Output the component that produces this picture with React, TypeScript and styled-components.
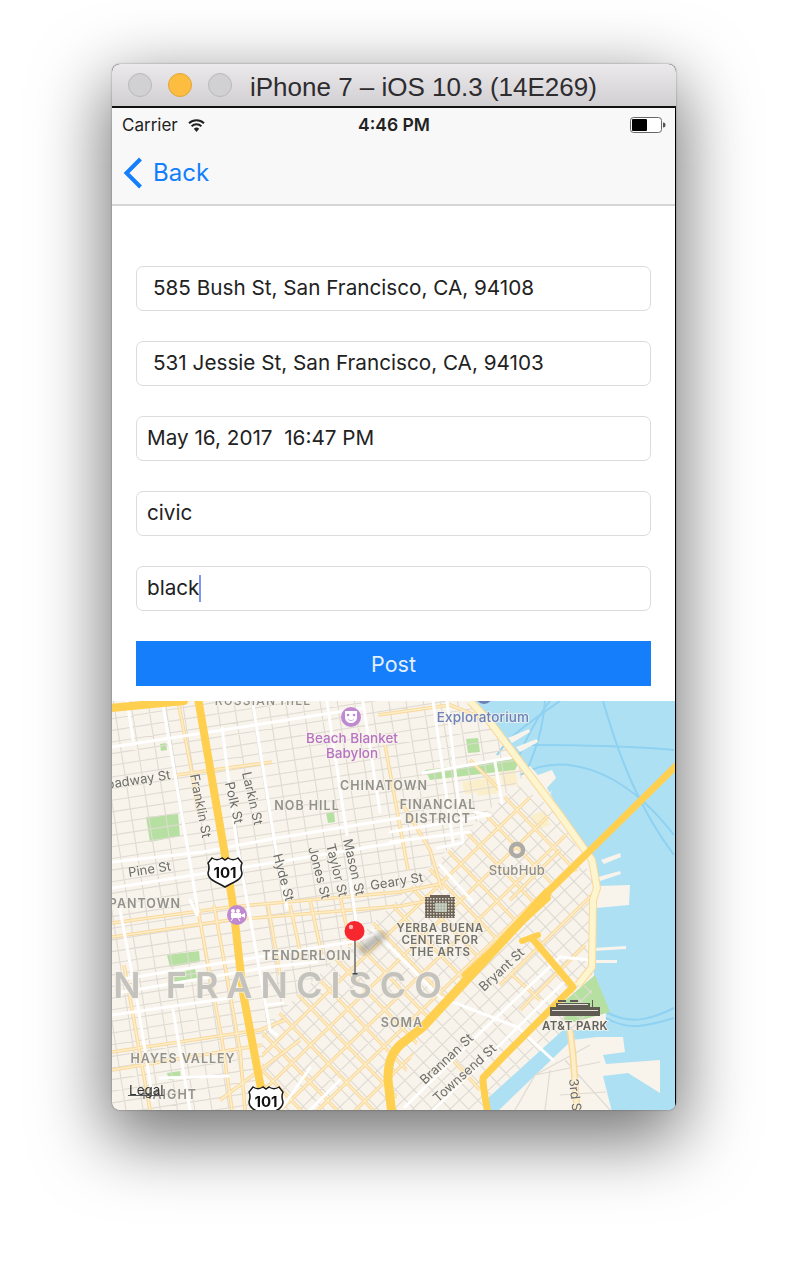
import React from 'react';
import styled, { createGlobalStyle } from 'styled-components';

const Global = createGlobalStyle`
  html, body { margin: 0; padding: 0; background: #fff; }
  body { width: 788px; height: 1270px; overflow: hidden; font-family: Inter, "Liberation Sans", sans-serif; }
`;
const Stage = styled.div`padding: 64px 0 0 112px;`;
const Window = styled.div`
  width: 564px; height: 1046px; border-radius: 8px; overflow: hidden;
  box-shadow: 0 24px 70px 6px rgba(0,0,0,0.55), 0 0 2px rgba(0,0,0,0.4);
  display: flex; flex-direction: column; background: #000;
`;
const TitleBar = styled.div`
  height: 42px; flex: none; display: flex; align-items: center; padding-left: 16px;
  background: linear-gradient(#ebe9eb, #d1cfd2);
  border-bottom: 2px solid #111;
`;
const Light = styled.span<{ $on?: boolean }>`
  width: 24px; height: 24px; border-radius: 50%; box-sizing: border-box; margin-right: 16px;
  background: ${p => (p.$on ? '#fdbd41' : '#d1d0d2')};
  border: 1px solid ${p => (p.$on ? '#e2a634' : '#b9b8ba')};
`;
const Title = styled.div`
  margin-left: 2px; padding-top: 5px; font: 26px "Liberation Sans", sans-serif; color: #2e2c2f; white-space: nowrap;
`;
const Screen = styled.div`
  flex: 1; min-height: 0; display: flex; flex-direction: column; background: #fff;
  margin: 0 1px 0 0;
`;
const Header = styled.div`
  height: 96px; flex: none; background: #f8f8f8; border-bottom: 2px solid #d6d6d6;
  display: flex; flex-direction: column;
`;
const StatusBar = styled.div`
  height: 29px; padding: 2px 9px 0 10px; display: grid; grid-template-columns: 1fr auto 1fr; align-items: center;
  font: 17px Inter, sans-serif; color: #222;
`;
const Carrier = styled.div`display: flex; align-items: center; gap: 9px;`;
const Clock = styled.div`font-weight: 600; font-size: 17.500px; padding-left: 0;`;
const Battery = styled.div`justify-self: end; display: flex;`;
const NavBar = styled.div`
  flex: 1; display: flex; align-items: center; gap: 10px; padding: 2px 0 0 11px;
  font: 24px Inter, sans-serif; color: #147efb;
`;
const Form = styled.div`
  padding: 60px 24px 15px 24px; display: flex; flex-direction: column; gap: 30px; flex: none;
`;
const Field = styled.div<{ $indent?: boolean }>`
  height: 45px; box-sizing: border-box; border: 1px solid #dcdcdc; border-radius: 7px;
  display: flex; align-items: center; padding: 0 0 3px ${p => (p.$indent ? 16 : 10)}px;
  font: 20.700px Inter, sans-serif; color: #222; white-space: pre;
`;
const Caret = styled.span`
  display: inline-block; width: 2px; height: 27px; margin-top: 2px; background: #7f95ee;
`;
const PostButton = styled.div`
  height: 45px; background: #147efb; color: #e3effd; display: flex; align-items: center; justify-content: center;
  font: 21.500px Inter, sans-serif;
`;
const MapView = styled.div`
  flex: 1; min-height: 0; overflow: hidden;
  svg { display: block; filter: blur(0.45px); }
`;
const MapText = styled.text<{ $s: number; $c: string; $w?: number; $ls?: number }>`
  font-family: Inter, "Liberation Sans", sans-serif;
  font-size: ${p => p.$s}px;
  fill: ${p => p.$c};
  font-weight: ${p => p.$w ?? 400};
  letter-spacing: ${p => p.$ls ?? 0}px;
  paint-order: stroke;
  stroke: rgba(247,243,235,0.7);
  stroke-width: 2px;
`;

type P = [number, number];
const poly = (pts: P[]) => 'M' + pts.map(p => p.join(' ')).join('L');

const NW_E: P = [0.988, -0.155];
const NW_N: P = [0.155, 0.988];
const SE_E: P = [0.72, -0.694];
const SE_N: P = [0.694, 0.72];

function family(o: P, dir: P, step: P, from: number, to: number): string {
  let d = '';
  for (let i = from; i <= to; i++) {
    const c: P = [o[0] + step[0] * i, o[1] + step[1] * i];
    d += `M${c[0] - dir[0] * 800} ${c[1] - dir[1] * 800}L${c[0] + dir[0] * 800} ${c[1] + dir[1] * 800}`;
  }
  return d;
}

const nwMinor =
  family([240, 850], NW_E, [NW_N[0] * 11.5, NW_N[1] * 11.5], -14, 22) +
  family([240, 850], NW_N, [NW_E[0] * 17, NW_E[1] * 17], -9, 26);
const seMinor =
  family([480, 990], SE_E, [SE_N[0] * 13, SE_N[1] * 13], -16, 16) +
  family([480, 990], SE_N, [SE_E[0] * 13, SE_E[1] * 13], -18, 18);
const seArterial =
  family([480, 990], SE_E, [SE_N[0] * 26, SE_N[1] * 26], -8, 8) +
  family([474, 990], SE_N, [SE_E[0] * 26, SE_E[1] * 26], -9, 9);

const ArterialsNW: P[][] = [
  [[178, 701], [192, 773], [198, 812]],
  [[177, 775], [272, 762]],
  [[112, 923], [230, 907], [400, 892], [440, 884]],
  [[112, 937], [230, 920], [400, 906], [432, 900]],
  [[197, 905], [222, 1040], [232, 1110]],
  [[214, 905], [240, 1050], [245, 1110]],
  [[268, 905], [280, 975]],
  [[290, 905], [302, 960]],
  [[310, 900], [322, 955]],
  [[340, 895], [350, 945]],
  [[112, 1052], [260, 1030], [285, 1020]],
  [[112, 1070], [262, 1045]],
  [[220, 1100], [300, 1040]],
  [[378, 715], [450, 705], [500, 725]],
  [[400, 800], [430, 850], [442, 890]],
  [[124, 965], [150, 1110]],
  [[385, 745], [408, 870]],
  [[470, 760], [480, 770], [500, 790]],
];
const ArterialsSE: P[][] = [
  [[510, 973], [540, 1000]],
  [[453, 1060], [480, 1090]],
  [[500, 985], [592, 895]],
  [[520, 1010], [585, 945]],
  [[560, 850], [510, 900]],
];
const WhiteRoads: P[][] = [
  [[163, 705], [190, 862], [198, 912]],
  [[127, 701], [133, 740]],
  [[222, 728], [237, 845], [247, 900], [270, 1030], [277, 1035]],
  [[253, 705], [275, 845], [287, 908]],
  [[327, 702], [347, 835]],
  [[363, 702], [380, 812]],
  [[112, 747], [255, 725], [363, 708]],
  [[112, 862], [203, 852], [277, 838], [400, 818]],
  [[112, 888], [207, 873], [277, 862], [400, 842]],
  [[423, 773], [515, 757]],
  [[390, 832], [450, 822], [490, 815]],
  [[390, 842], [470, 832]],
  [[437, 848], [462, 843]],
  [[433, 701], [453, 842]],
  [[447, 701], [463, 842]],
  [[495, 762], [502, 803]],
  [[475, 812], [490, 815]],
  [[440, 865], [473, 902]],
  [[117, 980], [240, 960], [350, 942], [373, 935]],
  [[117, 993], [270, 967], [317, 962]],
  [[112, 1015], [230, 998]],
  [[267, 1005], [283, 1003]],
  [[120, 910], [137, 1000], [153, 1100]],
  [[173, 1010], [190, 1110]],
  [[190, 900], [197, 915]],
  [[350, 880], [358, 935]],
  [[373, 930], [440, 997], [517, 1027], [553, 1060]],
  [[405, 1107], [480, 1033], [560, 957], [590, 960]],
  [[433, 1110], [563, 983]],
  [[160, 1078], [228, 1076]],
  [[282, 1108], [310, 1068]],
  [[310, 1110], [340, 1080]],
];

const Shield = ({ x, y }: { x: number; y: number }) => (
  <g transform={`translate(${x} ${y})`}>
    <path d="M-13 -14C-10 -12 -6 -12 -3 -14L0 -12L3 -14C6 -12 10 -12 13 -14L17 -9C15 -5 16 -2 17 1C17 8 8 10 0 15C-8 10 -17 8 -17 1C-16 -2 -15 -5 -17 -9Z"
      fill="#fff" stroke="#1a1a1a" strokeWidth="1.500" />
    <MapText x="0" y="6" textAnchor="middle" $s={15} $c="#111" $w={700} style={{ stroke: 'none' }}>101</MapText>
  </g>
);

const labels: { t: string; x: number; y: number; s: number; c: string; w?: number; ls?: number; r?: number; a?: 'start' | 'middle' | 'end' }[] = [
  { t: 'RUSSIAN HILL', x: 263, y: 705, s: 12, c: '#908f8a', w: 500, ls: 1.2, a: 'middle' },
  { t: 'Beach Blanket', x: 352, y: 743, s: 13.500, c: '#b772c2', w: 500, a: 'middle' },
  { t: 'Babylon', x: 352, y: 758, s: 13.500, c: '#b772c2', w: 500, a: 'middle' },
  { t: 'Exploratorium', x: 483, y: 722, s: 13.500, c: '#6d80b8', w: 500, ls: 0.2, a: 'middle' },
  { t: 'Broadway St', x: 171, y: 779, s: 13, c: '#6e6c68', r: -9, a: 'end' },
  { t: 'Franklin St', x: 190, y: 775, s: 13, c: '#6e6c68', r: 79 },
  { t: 'Polk St', x: 225, y: 783, s: 13, c: '#6e6c68', r: 77 },
  { t: 'Larkin St', x: 242, y: 773, s: 13, c: '#6e6c68', r: 77 },
  { t: 'Hyde St', x: 273, y: 855, s: 13, c: '#6e6c68', r: 75 },
  { t: 'Jones St', x: 308, y: 848, s: 13, c: '#6e6c68', r: 75 },
  { t: 'Taylor St', x: 326, y: 845, s: 13, c: '#6e6c68', r: 76 },
  { t: 'Mason St', x: 343, y: 840, s: 13, c: '#6e6c68', r: 77 },
  { t: 'Pine St', x: 129, y: 877, s: 13, c: '#6e6c68', r: -9 },
  { t: 'Geary St', x: 371, y: 890, s: 13, c: '#6e6c68', r: -9 },
  { t: 'NOB HILL', x: 307, y: 810, s: 12.500, c: '#93918c', w: 600, ls: 1, a: 'middle' },
  { t: 'CHINATOWN', x: 384, y: 790, s: 12.500, c: '#93918c', w: 600, ls: 1, a: 'middle' },
  { t: 'FINANCIAL', x: 438, y: 809, s: 12.500, c: '#93918c', w: 600, ls: 1, a: 'middle' },
  { t: 'DISTRICT', x: 438, y: 823, s: 12.500, c: '#93918c', w: 600, ls: 1, a: 'middle' },
  { t: 'StubHub', x: 517, y: 875, s: 13, c: '#8e8d89', w: 500, ls: 0.3, a: 'middle' },
  { t: 'JAPANTOWN', x: 181, y: 908, s: 12.500, c: '#93918c', w: 600, ls: 1, a: 'end' },
  { t: 'TENDERLOIN', x: 307, y: 960, s: 12.500, c: '#93918c', w: 600, ls: 1, a: 'middle' },
  { t: 'SAN FRANCISCO', x: 450, y: 998, s: 36, c: '#c3c2bc', w: 600, ls: 8, a: 'end' },
  { t: 'SOMA', x: 402, y: 1027, s: 12.500, c: '#93918c', w: 600, ls: 1, a: 'middle' },
  { t: 'YERBA BUENA', x: 440, y: 932, s: 11.500, c: '#73716b', w: 600, ls: 0.5, a: 'middle' },
  { t: 'CENTER FOR', x: 440, y: 944, s: 11.500, c: '#73716b', w: 600, ls: 0.5, a: 'middle' },
  { t: 'THE ARTS', x: 440, y: 956, s: 11.500, c: '#73716b', w: 600, ls: 0.5, a: 'middle' },
  { t: 'AT&T PARK', x: 575, y: 1030, s: 11.500, c: '#63625c', w: 600, ls: 0.4, a: 'middle' },
  { t: 'HAYES VALLEY', x: 183, y: 1063, s: 12.500, c: '#93918c', w: 600, ls: 1, a: 'middle' },
  { t: 'HAIGHT', x: 197, y: 1099, s: 12.500, c: '#93918c', w: 600, ls: 1, a: 'end' },
  { t: 'Brannan St', x: 425, y: 1085, s: 13, c: '#6e6c68', r: -43 },
  { t: 'Townsend St', x: 438, y: 1103, s: 13, c: '#6e6c68', r: -42 },
  { t: 'Bryant St', x: 484, y: 992, s: 13, c: '#6e6c68', r: -43 },
  { t: '3rd St', x: 569, y: 1079, s: 13, c: '#6e6c68', r: 84 },
];

const LAND_NORTH = 'M100 690H462L490 725L517 758L547 788L563 818L590 852L597 888L593 900V967L597 997L606 1012V1030L563 1030L488 1098V1120H100Z';

const MapArt = () => (
  <svg width="563" height="409" viewBox="112 701 563 409">
    <defs>
      <clipPath id="nw"><path d="M100 690H500L530 770L262 1030L262 1120H100Z" /></clipPath>
      <clipPath id="se"><path d="M517 785L262 1030L262 1120H592V985L592 880L560 812Z" /></clipPath>
      <clipPath id="seNorth"><path d="M517 785L262 1030L262 1120H388L423 1027L547 893L592 860Z" /></clipPath>
      <clipPath id="land"><path d={LAND_NORTH} /></clipPath>
      <filter id="soft" x="-40%" y="-40%" width="180%" height="180%"><feGaussianBlur stdDeviation="3" /></filter>
      <pattern id="bldg" width="3" height="3" patternUnits="userSpaceOnUse"><rect width="3" height="3" fill="#6e6357" /><rect x="1" y="1" width="1.500" height="1.500" fill="#d8d2c4" /></pattern>
    </defs>
    <rect x="100" y="690" width="600" height="430" fill="#aee0f4" />
    <path d={LAND_NORTH} fill="#f8f3eb" />
    <path d="M572 1040L597 1037L623 1037L625 1052L603 1055L606 1064L660 1060L660 1093L628 1073L603 1076L612 1112H497Z" fill="#f8f3eb" />
    <g fill="none" stroke="#8fd1f1" strokeWidth="2">
      <path d="M545 701C542 735 535 750 528 768" />
      <path d="M550 701C535 720 520 750 515 768" />
      <path d="M560 701C530 722 510 735 497 755" />
      <path d="M603 701C620 760 640 810 674 855" />
      <path d="M520 775C560 752 620 765 674 835" />
      <path d="M530 745C570 745 620 745 674 750" />
      <path d="M606 1012C630 1025 650 1020 674 1008" />
      <path d="M606 1018C630 1032 650 1025 674 1018" />
    </g>
    <g fill="#f8f3eb">
      <path d="M522 770L530 766L538 775L552 770L556 778L545 790L548 795L552 790L548 800L535 788Z" />
      <path d="M508 738L529 729L530 732L512 743Z" />
      <path d="M516 747L537 739L538 742L520 752Z" />
      <path d="M601 860L620 853L621 857L604 864Z" />
      <path d="M598 877L620 871L621 874L600 881Z" />
      <path d="M598 886L630 885L629 905L596 908Z" />
      <path d="M593 948L626 946V949L594 951Z" />
      <path d="M593 960L617 960V963L594 963Z" />
    </g>
    <g fill="#b6e0a2">
      <path d="M146 817L178 814L180 836L150 842Z" />
      <path d="M160 744L166 743L167 750L161 751Z" />
      <path d="M326 813L334 812L335 822L328 823Z" />
      <path d="M466 739L478 738L480 752L468 753Z" />
      <path d="M425 770L520 758L515 770L430 780Z" />
      <path d="M167 955L199 951L200 962L170 967Z" />
      <path d="M172 973L195 969L198 980L175 985Z" />
      <path d="M167 1073L180 1071L181 1078L169 1080Z" />
      <path d="M595 975L560 1005L565 1022L575 1022L610 1012Z" />
    </g>
    <g fill="#fbeecb">
      <path d="M462 782L475 780L478 792L465 794Z" />
      <path d="M475 780L495 777L498 793L478 796Z" />
      <path d="M500 772L515 770L518 785L503 787Z" />
      <path d="M530 816L545 810L550 825L537 830Z" />
    </g>
    <g clipPath="url(#land)">
      <g clipPath="url(#nw)"><path d={nwMinor} fill="none" stroke="#dfdbd2" strokeWidth="1.100" /></g>
      <g clipPath="url(#se)"><path d={seMinor} fill="none" stroke="#dfdbd2" strokeWidth="1.100" /></g>
      <g clipPath="url(#seNorth)">
        <path d={seArterial} fill="none" stroke="#f9d89c" strokeWidth="3.400" />
        <path d={seArterial} fill="none" stroke="#fdeec8" strokeWidth="1.400" />
      </g>
      <g fill="none" strokeLinejoin="round">
        {[...ArterialsNW, ...ArterialsSE].map((r, i) => <path key={i} d={poly(r)} stroke="#f9d89c" strokeWidth="3.600" />)}
        {[...ArterialsNW, ...ArterialsSE].map((r, i) => <path key={i} d={poly(r)} stroke="#fdeec8" strokeWidth="1.600" />)}
      </g>
    </g>
    <path d="M515 1110L535 1075L600 1062M535 1075L590 1045M545 1110L550 1070M560 1095L606 1092M565 1060L610 1110" fill="none" stroke="#dfdbd2" strokeWidth="1.200" />
    <g fill="none" strokeLinecap="round" strokeLinejoin="round">
      {WhiteRoads.map((r, i) => <path key={i} d={poly(r)} stroke="#fff" strokeWidth="3" />)}
    </g>
    <g fill="none" strokeLinejoin="round">
      <path d="M470 701L490 722L517 758L560 815L592 860L597 888L593 900L592 967L578 985" stroke="#f9d89c" strokeWidth="8" />
      <path d="M470 701L490 722L517 758L560 815L592 860L597 888L593 900L592 967L578 985" stroke="#fdf5ce" strokeWidth="6" />
      <path d="M570 1030L573 1055L577 1110" stroke="#f9d89c" strokeWidth="7" />
      <path d="M570 1030L573 1055L577 1110" stroke="#fdeec8" strokeWidth="4" />
    </g>
    <g fill="none" stroke="#ffd04f" strokeLinejoin="round" strokeLinecap="round">
      <path d="M100 709L184 701" strokeWidth="8" />
      <path d="M198 698L225 855L233 905L243 993L260 1083L266 1112" strokeWidth="8" />
      <path d="M680 762L547 893" strokeWidth="7" />
      <path d="M547 893L423 1027L400 1045C390 1055 388 1065 388 1080L392 1115" strokeWidth="9" />
      <path d="M548 898L465 975" strokeWidth="6" />
      <path d="M532 938L573 987L503 1057L483 1078C483 1090 486 1100 488 1115" strokeWidth="7" />
      <path d="M522 941L538 935" strokeWidth="6" />
    </g>
    <Shield x={225} y={872} />
    <Shield x={266} y={1101} />
    <circle cx="484" cy="695" r="9" fill="#6d80b8" />
    <g>
      <circle cx="351" cy="717" r="10" fill="#c08ad0" />
      <path d="M345 711h12v6c0 4-3 6-6 6s-6-2-6-6z" fill="#fff" />
      <circle cx="348" cy="715" r="1.300" fill="#c08ad0" /><circle cx="354" cy="715" r="1.300" fill="#c08ad0" />
      <path d="M347.500 718.500c2 2 5 2 7 0c-1 3-6 3-7 0z" fill="#c08ad0" />
    </g>
    <g>
      <circle cx="237" cy="915" r="10" fill="#c08ad0" />
      <circle cx="233" cy="911" r="2" fill="#fff" /><circle cx="238" cy="911" r="2" fill="#fff" />
      <rect x="231" y="913" width="10" height="5" fill="#fff" /><path d="M241 915l4-2v5l-4-2z" fill="#fff" />
      <path d="M233 918l-2 3M238 918l2 3" stroke="#fff" strokeWidth="1" />
    </g>
    <circle cx="517" cy="850" r="6" fill="none" stroke="#adaba6" strokeWidth="4.500" />
    <g>
      <rect x="425" y="897" width="30" height="21" fill="url(#bldg)" />
      <rect x="430" y="895" width="20" height="3" fill="#6e6357" />
      <rect x="435" y="903" width="12" height="9" fill="#cfe0d0" opacity="0.7" />
    </g>
    <g fill="#5f5a52">
      <rect x="550" y="1007" width="50" height="9" />
      <rect x="556" y="1003" width="34" height="4" />
      <rect x="558" y="1000" width="8" height="2" /><rect x="570" y="1000" width="8" height="2" />
      <rect x="592" y="1000" width="1" height="7" />
    </g>
    <g fill="#e7e2d7">
      <rect x="552" y="1010" width="46" height="1" /><rect x="558" y="1004" width="30" height="1" />
    </g>
    {labels.map(l => (
      <MapText key={l.t} x={l.x} y={l.y} $s={l.s} $c={l.c} $w={l.w} $ls={l.ls} textAnchor={l.a ?? 'start'}
        transform={l.r ? `rotate(${l.r} ${l.x} ${l.y})` : undefined}>{l.t}</MapText>
    ))}
    <MapText x="129" y="1095" $s={13.500} $c="#333" style={{ stroke: 'none' }}>Legal</MapText>
    <path d="M128 1095.500H164" stroke="#555" strokeWidth="1" />
    <path d="M363 950L382 936" stroke="#555" strokeWidth="9" strokeLinecap="round" opacity="0.42" filter="url(#soft)" />
    <rect x="354" y="938" width="2" height="36" fill="#8a8a88" />
    <rect x="352.500" y="973" width="5" height="1.500" fill="#444" />
    <circle cx="354.500" cy="931" r="10" fill="#f6272e" />
    <circle cx="351" cy="927" r="2.200" fill="#ffb4b4" />
  </svg>
);

const fields = ['585 Bush St, San Francisco, CA, 94108', '531 Jessie St, San Francisco, CA, 94103'];
const plain = ['May 16, 2017  16:47 PM', 'civic'];

export default function App() {
  return (
    <>
      <Global />
      <Stage>
        <Window>
          <TitleBar>
            <Light /><Light $on /><Light />
            <Title>iPhone 7 – iOS 10.3 (14E269)</Title>
          </TitleBar>
          <Screen>
            <Header>
              <StatusBar>
                <Carrier>
                  Carrier
                  <svg width="19" height="14" viewBox="0 0 19 14">
                    <path d="M9.500 14L6.800 10.800a4 4 0 0 1 5.400 0z" fill="#222" />
                    <path d="M4.600 8.200a7.200 7.200 0 0 1 9.800 0M2 5.300a11 11 0 0 1 15 0" fill="none" stroke="#222" strokeWidth="2" />
                  </svg>
                </Carrier>
                <Clock>4:46 PM</Clock>
                <Battery>
                  <svg width="36" height="16" viewBox="0 0 36 16">
                    <rect x="0.500" y="0.500" width="31" height="15" rx="3" fill="#fff" stroke="#666" />
                    <rect x="2" y="2" width="15" height="12" rx="1" fill="#000" />
                    <path d="M33 5.500c2 0 2.500 1 2.500 2.500s-.5 2.500-2.500 2.500z" fill="#555" />
                  </svg>
                </Battery>
              </StatusBar>
              <NavBar>
                <svg width="20" height="32" viewBox="0 0 20 32">
                  <path d="M17.500 2L3.500 16l14 14" fill="none" stroke="#147efb" strokeWidth="4" />
                </svg>
                Back
              </NavBar>
            </Header>
            <Form>
              {fields.map(f => <Field key={f} $indent>{f}</Field>)}
              {plain.map(f => <Field key={f}>{f}</Field>)}
              <Field>black<Caret /></Field>
              <PostButton>Post</PostButton>
            </Form>
            <MapView><MapArt /></MapView>
          </Screen>
        </Window>
      </Stage>
    </>
  );
}
